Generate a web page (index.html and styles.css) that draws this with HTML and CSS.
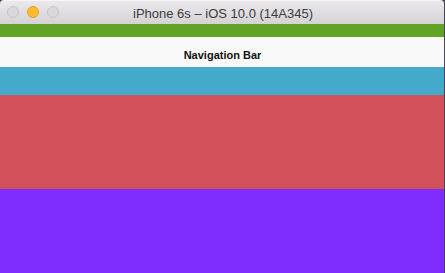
FILE: index.html
```html
<!DOCTYPE html>
<html lang="en">

<head>
    <meta charset="UTF-8">
    <meta name="viewport" content="width=device-width, initial-scale=1.0">
    <title>iPhone 6s – iOS 10.0 (14A345)</title>
    <link rel="stylesheet" href="styles.css">
</head>

<body>
    <div class="window">
        <div class="titlebar">
            <div class="lights">
                <span class="light"></span>
                <span class="light minimize"></span>
                <span class="light"></span>
            </div>
            <div class="title">iPhone 6s – iOS 10.0 (14A345)</div>
        </div>
        <div class="screen">
            <div class="status-bar"></div>
            <div class="nav-bar">Navigation Bar</div>
            <div class="block blue"></div>
            <div class="block red"></div>
            <div class="block purple"></div>
        </div>
    </div>
</body>

</html>
```

FILE: styles.css
```css
* {
    margin: 0;
    padding: 0;
    box-sizing: border-box;
}

body {
    width: 445px;
    height: 273px;
    overflow: hidden;
    background-color: #4a4458;
    font-family: "Liberation Sans", Arial, sans-serif;
}

.window {
    width: 444px;
    height: 273px;
    display: flex;
    flex-direction: column;
    border-top-right-radius: 4px;
    border-top-left-radius: 4px;
    overflow: hidden;
}

.titlebar {
    position: relative;
    height: 24px;
    flex-shrink: 0;
    display: flex;
    align-items: center;
    justify-content: center;
    background: linear-gradient(#ebe9eb, #d4d2d4);
    border-top: 1px solid #f6f6f6;
}

.lights {
    position: absolute;
    left: 7px;
    top: 5px;
    display: flex;
    gap: 8px;
}

.light {
    width: 12px;
    height: 12px;
    border-radius: 50%;
    background-color: #dad8da;
    border: 1px solid #c6c4c6;
}

.light.minimize {
    background-color: #fdbc2e;
    border-color: #e0a028;
}

.title {
    font-size: 13px;
    color: #3c3c3c;
    padding-top: 1px;
    padding-left: 2px;
}

.screen {
    flex: 1;
    display: flex;
    flex-direction: column;
}

.status-bar {
    height: 13px;
    background-color: #62a325;
}

.nav-bar {
    height: 30px;
    background-color: #f9f9f9;
    display: flex;
    align-items: center;
    justify-content: center;
    font-size: 11px;
    font-weight: bold;
    color: #111;
    padding-top: 6px;
    padding-left: 1px;
}

.block.blue {
    height: 28px;
    background-color: #44aacc;
}

.block.red {
    height: 94px;
    background-color: #d1505a;
}

.block.purple {
    flex: 1;
    background-color: #7f2dff;
}
```
